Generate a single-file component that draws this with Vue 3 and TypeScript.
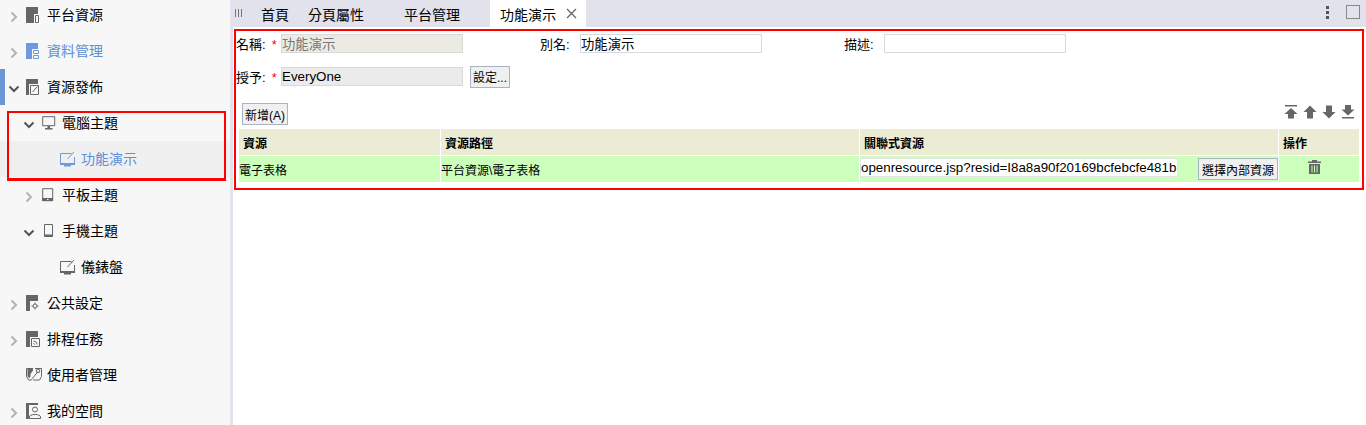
<template>
  <div class="page">
    <aside class="sidebar">
      <ul class="tree">
        <li
          v-for="row in rows"
          :key="row.label"
          class="row"
          :class="[`level-${row.level}`, { active: row.active, selected: row.selected, current: row.current }]"
        >
          <span v-if="row.level < 3" class="caret">
            <svg v-if="row.caret === 'right'" width="8" height="12" viewBox="0 0 8 12">
              <path d="M1.500 1.500 6 6l-4.500 4.500" fill="none" stroke="#b3b3b3" stroke-width="2" />
            </svg>
            <svg v-else-if="row.caret === 'down'" width="12" height="8" viewBox="0 0 12 8">
              <path d="M1.500 1.500 6 6l4.500-4.500" fill="none" stroke="#555" stroke-width="2" />
            </svg>
          </span>
          <span class="icon">
            <svg width="17" height="18" viewBox="0 0 17 18" :class="{ blue: row.active || row.selected }">
              <template v-if="row.icon === 'platform'">
                <path d="M1 2h12v16H1z" class="fill" />
                <path d="M9 9h6v9H9z" fill="#f7f7f7" />
                <path d="M10.500 10.500h3v7h-3z" class="line" />
              </template>
              <template v-else-if="row.icon === 'data'">
                <path d="M1 2h12v16H1z" class="fill" />
                <path d="M7 8h8v10H7z" fill="#f7f7f7" />
                <path d="M8.500 9.500h5v3h-5zM8.500 14.500h5v3h-5z" class="line" />
              </template>
              <template v-else-if="row.icon === 'publish'">
                <path d="M1 2h12v16H1z" class="fill" />
                <path d="M4 7h11v11H4z" fill="#f7f7f7" />
                <path d="M5.500 8.500h8v9h-8z" class="line" stroke-width="1.300" />
                <path d="m7.500 15 5-5.500" class="line" stroke-width="1.600" />
              </template>
              <template v-else-if="row.icon === 'desktop'">
                <path d="M2.700 3.700h12v9h-12z" class="line" stroke-width="1.500" />
                <path d="M7.500 13h2.500v2.500H7.500zM5 15h7.500v1.500H5z" class="fill" />
              </template>
              <template v-else-if="row.icon === 'tablet'">
                <path d="M2.700 3.700h10v12h-10z" class="line" stroke-width="1.500" />
                <path d="M2 13h11v3H2z" class="fill" />
                <path d="M7 14h1.500v1H7z" fill="#f7f7f7" />
              </template>
              <template v-else-if="row.icon === 'phone'">
                <path d="M4.500 3.500h8v12h-8z" class="line" stroke-width="1.200" />
                <path d="M4.500 13.500h8v2.500h-8z" class="fill" />
              </template>
              <template v-else-if="row.icon === 'screen'">
                <path d="M1.500 4.500h11M1.500 4.500v10h14V8" class="line" stroke-width="1.400" />
                <path d="m8.500 10 6.500-7" class="line" stroke-width="2.400" />
                <path d="M1 14h15v2H1zM5 16h7v1.500H5z" class="fill" />
              </template>
              <template v-else-if="row.icon === 'settings'">
                <path d="M1 2h12v16H1z" class="fill" />
                <path d="M5 8h10v10H5z" fill="#f7f7f7" />
                <circle cx="10" cy="13" r="2" class="line" stroke-width="1.300" />
                <path d="M10 9.500v1.500M10 15v1.500M6.500 13H8M12 13h1.500" class="line" />
              </template>
              <template v-else-if="row.icon === 'schedule'">
                <path d="M1 2h12v16H1z" class="fill" />
                <path d="M5 8h11v10H5z" fill="#f7f7f7" />
                <path d="M6.500 9.500h8v8h-8z" class="line" />
                <path d="M8.500 12c2 0 3.500 1.500 3.500 3.500M8.500 14.500c.6 0 1 .4 1 1" class="line" />
              </template>
              <template v-else-if="row.icon === 'users'">
                <path d="M8 3.500H1.500v8l2 3.500h3" class="line" stroke-width="1.300" />
                <path d="M2.500 4h5.500v1.500l-2.500 3.500v2.500l-1 1.500-2-1.500z" class="fill" />
                <path d="M10 3.500h6.500v8l-2 3.500H8" class="line" stroke-width="1.300" />
                <path d="m6.500 14.500 6.500-8" class="line" stroke-width="1.700" />
                <circle cx="13" cy="6" r="1.800" class="line" />
              </template>
              <template v-else>
                <path d="M1 2h12v16H1z" class="fill" />
                <path d="M4 4h13v14H4z" fill="#f7f7f7" />
                <circle cx="10" cy="8.500" r="2.500" class="line" />
                <path d="M4.500 17.500v-1.500c0-1.500 2-2.500 5.500-2.500s5.500 1 5.500 2.500v1.500z" class="line" />
              </template>
            </svg>
          </span>
          <span class="label">{{ row.label }}</span>
        </li>
      </ul>
    </aside>

    <main class="main">
      <header class="tabs">
        <span class="grip"><i></i><i></i><i></i></span>
        <span v-for="tab in tabs" :key="tab.label" class="tab" :style="{ width: tab.width + 'px' }">{{ tab.label }}</span>
        <span class="tab tab-active">
          功能演示
          <svg width="11" height="11" viewBox="0 0 11 11">
            <path d="m1 1 9 9M10 1l-9 9" stroke="#666" stroke-width="1.300" fill="none" />
          </svg>
        </span>
        <span class="tab-tools">
          <span class="dots"><i></i><i></i><i></i></span>
          <span class="square"></span>
        </span>
      </header>

      <section class="panel">
        <div class="form-row">
          <div class="field first">
            <label>名稱:<em>*</em></label>
            <input class="disabled" value="功能演示" readonly />
          </div>
          <div class="field">
            <label>別名:</label>
            <input value="功能演示" readonly />
          </div>
          <div class="field">
            <label>描述:</label>
            <input value="" readonly />
          </div>
        </div>
        <div class="form-row second">
          <div class="field first">
            <label>授予:<em>*</em></label>
            <input class="grant" value="EveryOne" readonly />
            <button class="btn set">設定...</button>
          </div>
        </div>

        <div class="toolbar">
          <button class="btn add">新增(A)</button>
          <span class="moves">
            <svg width="14" height="14" viewBox="0 0 14 14"><path d="M1 0h12v1.500H1zM7 3l6.500 6H10v4.500H4V9H.5z" /></svg>
            <svg width="14" height="14" viewBox="0 0 14 14"><path d="M7 .5l6.500 6.500H10v6.500H4V7H.5z" /></svg>
            <svg width="14" height="14" viewBox="0 0 14 14"><path d="M4 .5h6V7h3.500L7 13.500.5 7H4z" /></svg>
            <svg width="14" height="14" viewBox="0 0 14 14"><path d="M4 0h6v4.500h3.500L7 10.500.5 4.500H4zM1 12h12v1.500H1z" /></svg>
          </span>
        </div>

        <table class="grid">
          <colgroup>
            <col style="width: 201px" />
            <col style="width: 418px" />
            <col style="width: 418px" />
            <col style="width: 80px" />
          </colgroup>
          <thead>
            <tr>
              <th>資源</th>
              <th>資源路徑</th>
              <th>關聯式資源</th>
              <th>操作</th>
            </tr>
          </thead>
          <tbody>
            <tr>
              <td>電子表格</td>
              <td>平台資源\電子表格</td>
              <td>
                <div class="link-cell">
                  <input class="url" value="openresource.jsp?resid=I8a8a90f20169bcfebcfe481b" readonly />
                  <button class="btn pick">選擇內部資源</button>
                </div>
              </td>
              <td class="ops">
                <svg width="13" height="14" viewBox="0 0 13 14">
                  <path d="M4 0h5v1.500h4V3H0V1.500h4zM1 4h11v10H1zM3.500 5.500v7h1v-7zM6 5.500v7h1v-7zM8.500 5.500v7h1v-7z" fill-rule="evenodd" />
                </svg>
              </td>
            </tr>
          </tbody>
        </table>
      </section>
    </main>

    <div class="mark mark-tree"></div>
    <div class="mark mark-panel"></div>
  </div>
</template>

<script setup lang="ts">
interface TreeRow {
  label: string;
  level: 1 | 2 | 3;
  icon: string;
  caret?: "right" | "down";
  active?: boolean;
  selected?: boolean;
  current?: boolean;
}

const rows: TreeRow[] = [
  { label: "平台資源", level: 1, icon: "platform", caret: "right" },
  { label: "資料管理", level: 1, icon: "data", caret: "right", active: true },
  { label: "資源發佈", level: 1, icon: "publish", caret: "down", current: true },
  { label: "電腦主題", level: 2, icon: "desktop", caret: "down" },
  { label: "功能演示", level: 3, icon: "screen", selected: true },
  { label: "平板主題", level: 2, icon: "tablet", caret: "right" },
  { label: "手機主題", level: 2, icon: "phone", caret: "down" },
  { label: "儀錶盤", level: 3, icon: "screen" },
  { label: "公共設定", level: 1, icon: "settings", caret: "right" },
  { label: "排程任務", level: 1, icon: "schedule", caret: "right" },
  { label: "使用者管理", level: 1, icon: "users" },
  { label: "我的空間", level: 1, icon: "space", caret: "right" },
];

const tabs = [
  { label: "首頁", width: 47 },
  { label: "分頁屬性", width: 96 },
  { label: "平台管理", width: 86 },
];
</script>

<style>
html,
body {
  margin: 0;
  overflow: hidden;
  background: #fff;
}
</style>

<style scoped>
.page {
  position: relative;
  display: flex;
  width: 1366px;
  height: 425px;
  overflow: hidden;
  font-family: "Liberation Sans", "Noto Sans CJK TC", sans-serif;
  font-size: 14px;
  color: #000;
}

.sidebar {
  flex: none;
  width: 230px;
  background: #f7f7f7;
  border-right: 3px solid #e1e2ec;
  overflow: hidden;
}

.tree {
  list-style: none;
  margin: -3px 0 0;
  padding: 0;
}

.row {
  display: flex;
  align-items: center;
  height: 36px;
  padding-bottom: 2px;
  box-sizing: border-box;
}

.level-1 {
  padding-left: 8px;
}

.level-2 {
  padding-left: 23px;
}

.level-3 {
  padding-left: 59px;
}

.current {
  box-shadow: inset 5px 0 0 #6a97d4;
}

.selected {
  background: #f0f0f0;
}

.active .label,
.selected .label {
  color: #5f8fd6;
}

.caret {
  display: flex;
  align-items: center;
  justify-content: center;
  width: 12px;
  margin-top: 5px;
  margin-right: 5px;
}

.icon {
  display: flex;
  width: 17px;
  margin-right: 5px;
}

.icon .fill {
  fill: #666;
}

.icon .line {
  fill: none;
  stroke: #666;
  stroke-width: 1;
}

.icon .blue .fill {
  fill: #7298dc;
}

.icon .blue .line {
  stroke: #7298dc;
}

.tabs {
  display: flex;
  align-items: center;
  height: 27px;
  background: #e1e2ec;
}

.grip {
  display: flex;
  gap: 2px;
  width: 28px;
  padding-left: 2px;
  padding-bottom: 2px;
  box-sizing: border-box;
}

.grip i {
  width: 1px;
  height: 8px;
  background: #777;
}

.tab {
  flex: none;
  white-space: nowrap;
}

.tab-active {
  display: flex;
  align-items: center;
  gap: 10px;
  height: 27px;
  width: 96px;
  padding-left: 10px;
  box-sizing: border-box;
  background: #fff;
}

.tab-tools {
  display: flex;
  align-items: center;
  margin-left: auto;
  gap: 17px;
  padding-right: 6px;
  padding-bottom: 3px;
}

.dots {
  display: flex;
  flex-direction: column;
  gap: 2px;
}

.dots i {
  width: 3px;
  height: 3px;
  background: #555;
}

.square {
  width: 12px;
  height: 12px;
  border: 1px solid #888;
}

.main {
  flex: 1;
  min-width: 0;
}

.panel {
  padding: 7px 4px 0 3px;
  font-size: 13px;
}

.form-row {
  display: flex;
  height: 19px;
}

.form-row.second {
  margin-top: 14px;
}

.field {
  display: flex;
  align-items: center;
  width: 304px;
  flex: none;
}

.field label {
  flex: none;
  width: 40px;
  white-space: nowrap;
}

.field.first label {
  width: 45px;
}

.field em {
  margin-left: 6px;
  font-style: normal;
  color: #f00;
}

input {
  width: 182px;
  height: 19px;
  padding: 0;
  box-sizing: border-box;
  border: 1px solid #d9d9d9;
  outline: none;
  font-family: inherit;
  font-size: 13.333px;
  color: #000;
  background: #fff;
}

input.disabled {
  background: #ebebe4;
  color: #777;
}

input.grant {
  background: #ebebeb;
}

.btn {
  box-sizing: border-box;
  padding: 0;
  height: 22px;
  border: 1px solid #a9b4c2;
  background: #f0f0f0;
  font-family: inherit;
  font-size: 12px;
  color: #000;
}

.set {
  flex: none;
  width: 40px;
  margin-left: 7px;
}

.toolbar {
  display: flex;
  align-items: flex-start;
  justify-content: space-between;
  margin-top: 17px;
  padding-left: 6px;
  padding-right: 7px;
}

.add {
  width: 46px;
}

.moves {
  display: flex;
  gap: 5px;
  margin-top: 2px;
}

.moves svg {
  fill: #666;
}

.grid {
  table-layout: fixed;
  width: 1122px;
  margin: 3px 0 0 2px;
  border-collapse: separate;
  border-spacing: 1px;
  font-size: 12px;
}

.grid th {
  height: 26px;
  padding: 0 0 0 4px;
  box-sizing: border-box;
  text-align: left;
  font-weight: 700;
  background: #ecebd4;
}

.grid td {
  height: 26px;
  padding: 0;
  box-sizing: border-box;
  background: #ccffbb;
}

.link-cell {
  display: flex;
  align-items: flex-start;
  justify-content: space-between;
  height: 26px;
  padding-top: 2px;
  box-sizing: border-box;
}

.url {
  width: 318px;
  border-color: #e4e4e4;
}

.pick {
  width: 80px;
}

.grid td.ops {
  vertical-align: top;
}

.ops svg {
  display: block;
  margin: 4px 0 0 29px;
  fill: #666;
}

.mark {
  position: absolute;
  box-sizing: border-box;
  border: 2px solid #f00;
  pointer-events: none;
}

.mark-tree {
  left: 7px;
  top: 111px;
  width: 219px;
  height: 70px;
  border-width: 2px 2px 3px;
}

.mark-panel {
  left: 234px;
  top: 29px;
  width: 1130px;
  height: 161px;
}
</style>
